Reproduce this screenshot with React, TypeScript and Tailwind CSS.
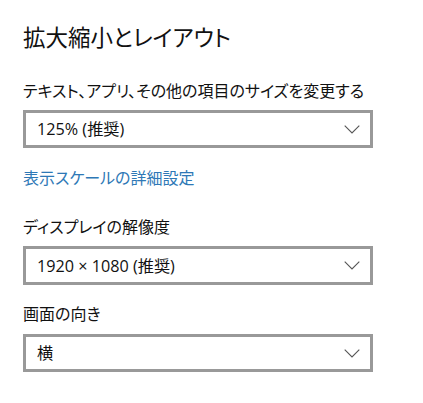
import React from "react";

const font = {
  fontFamily: '"Noto Sans CJK JP", "Noto Sans", sans-serif',
};

const valueFont = {
  fontFamily: '"Open Sans", "Noto Sans CJK JP", sans-serif',
};

function Chevron() {
  return (
    <svg width="16" height="9" viewBox="0 0 16 9" fill="none">
      <path d="M0.7 0.7 L8 8 L15.3 0.7" stroke="#555" strokeWidth="1.1" />
    </svg>
  );
}

function Dropdown({ value, className = "" }: { value: string; className?: string }) {
  return (
    <div
      className={`flex h-[38px] w-[350px] items-center justify-between border-[3px] border-[#999999] bg-white pl-[11px] pr-[10px] ${className}`}
    >
      <span className="text-[16.2px] leading-[20px] text-[#111]" style={valueFont}>
        {value}
      </span>
      <Chevron />
    </div>
  );
}

export default function App() {
  return (
    <div
      className="flex h-[403px] w-[423px] flex-col bg-white pl-[23px] pt-[21px] [font-feature-settings:'palt']"
      style={font}
    >
      <h1 className="text-[22.5px] font-normal leading-[30px] text-[#111]">拡大縮小とレイアウト</h1>
      <div className="mt-[29px] text-[16px] leading-[20px] text-[#111]">
        テキスト、アプリ、その他の項目のサイズを変更する
      </div>
      <Dropdown value="125% (推奨)" className="mt-[10px]" />
      <div className="mt-[19px] text-[16px] leading-[20px] text-[#2e78b6]">表示スケールの詳細設定</div>
      <div className="mt-[29px] text-[16px] leading-[20px] text-[#111]">ディスプレイの解像度</div>
      <Dropdown value="1920 × 1080 (推奨)" className="mt-[10px] h-[39px]" />
      <div className="mt-[18px] text-[16px] leading-[20px] text-[#111]">画面の向き</div>
      <Dropdown value="横" className="mt-[11px]" />
    </div>
  );
}
